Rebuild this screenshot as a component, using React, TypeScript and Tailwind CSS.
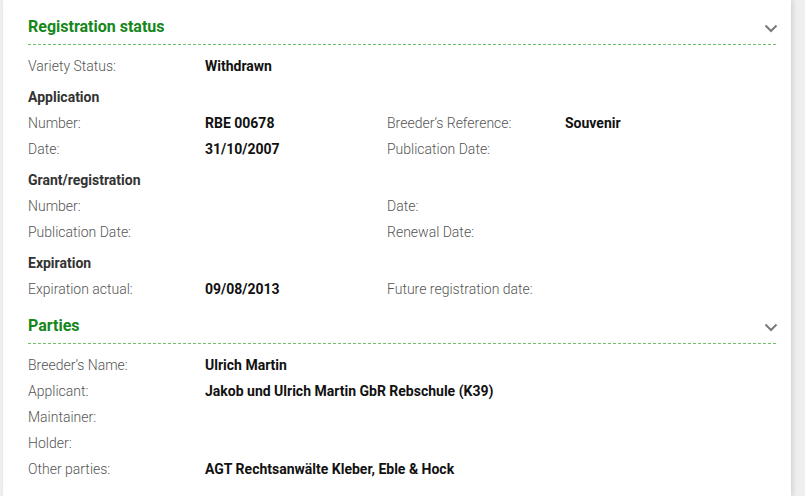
import { ReactNode } from "react";

const font = { fontFamily: "Roboto, 'Liberation Sans', sans-serif" };

function Chevron() {
  return (
    <svg width="14" height="9" viewBox="0 0 14 9" className="mt-[2px]">
      <path d="M1.5 1.5 L7 7 L12.5 1.5" fill="none" stroke="#7a7a7a" strokeWidth="2" />
    </svg>
  );
}

function SectionHeader({ title }: { title: string }) {
  return (
    <div>
      <div className="flex h-[26px] items-center justify-between">
        <h2 className="text-[16px] font-bold text-[#15871a]">{title}</h2>
        <Chevron />
      </div>
      <div className="mt-[4px] h-px bg-[repeating-linear-gradient(90deg,#6cbf6c_0_3px,transparent_3px_5px)]" />
    </div>
  );
}

function Row({
  label,
  value,
  label2,
  value2,
}: {
  label: string;
  value?: ReactNode;
  label2?: string;
  value2?: ReactNode;
}) {
  return (
    <div className="grid h-[26px] grid-cols-[177px_182px_178px_1fr] items-center text-[14px]">
      <div className="whitespace-nowrap font-light text-[#555]">{label}</div>
      <div className="whitespace-nowrap font-bold text-[#111]">{value}</div>
      <div className="whitespace-nowrap font-light text-[#555]">{label2}</div>
      <div className="whitespace-nowrap font-bold text-[#111]">{value2}</div>
    </div>
  );
}

function SubHeading({ children }: { children: string }) {
  return (
    <div className="mt-[5px] flex h-[26px] items-center text-[14px] font-bold text-[#333]">
      {children}
    </div>
  );
}

export default function App() {
  return (
    <div className="flex h-[496px] w-[805px] overflow-hidden bg-[#efefef]" style={font}>
      <div className="ml-[3px] h-full w-[788px] bg-white shadow-[2px_0_5px_rgba(0,0,0,0.12)]">
        <div className="ml-[25px] w-[750px] pt-[14px]">
          <SectionHeader title="Registration status" />
          <div className="pt-[8px]">
            <Row label="Variety Status:" value="Withdrawn" />
            <SubHeading>Application</SubHeading>
            <Row
              label="Number:"
              value="RBE 00678"
              label2="Breeder’s Reference:"
              value2="Souvenir"
            />
            <Row label="Date:" value="31/10/2007" label2="Publication Date:" />
            <SubHeading>Grant/registration</SubHeading>
            <Row label="Number:" label2="Date:" />
            <Row label="Publication Date:" label2="Renewal Date:" />
            <SubHeading>Expiration</SubHeading>
            <Row
              label="Expiration actual:"
              value="09/08/2013"
              label2="Future registration date:"
            />
          </div>

          <div className="mt-[11px]">
            <SectionHeader title="Parties" />
            <div className="pt-[8px]">
              <Row label="Breeder’s Name:" value="Ulrich Martin" />
              <Row label="Applicant:" value="Jakob und Ulrich Martin GbR Rebschule (K39)" />
              <Row label="Maintainer:" />
              <Row label="Holder:" />
              <Row label="Other parties:" value="AGT Rechtsanwälte Kleber, Eble & Hock" />
            </div>
          </div>
        </div>
      </div>
    </div>
  );
}
